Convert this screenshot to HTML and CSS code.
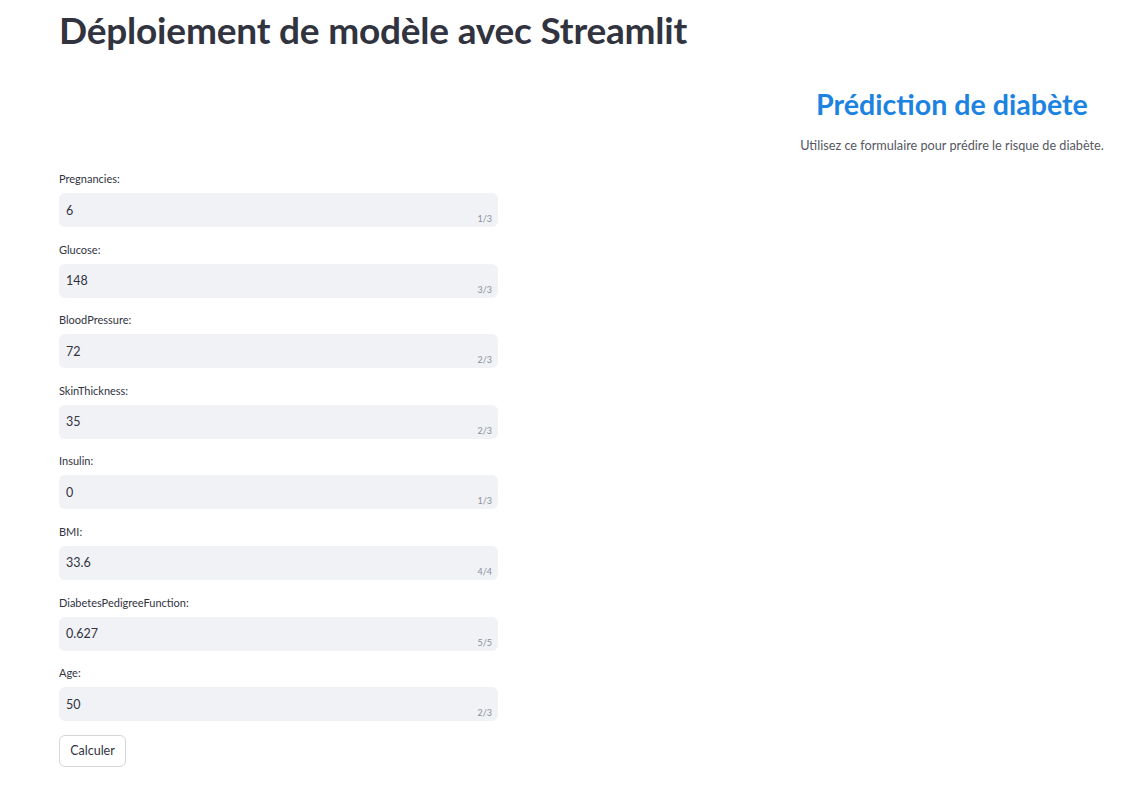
FILE: index.html
```html
<!DOCTYPE html>
<html lang="fr">
<head>
<meta charset="utf-8">
<title>Déploiement de modèle avec Streamlit</title>
<link rel="stylesheet" href="styles.css">
</head>
<body>
<main class="page">
  <h1 class="title">Déploiement de modèle avec Streamlit</h1>
  <section class="intro">
    <div class="intro-box">
      <h2 class="subtitle">Prédiction de diabète</h2>
      <p class="lead">Utilisez ce formulaire pour prédire le risque de diabète.</p>
    </div>
  </section>
  <form class="form">
    <div class="field"><label class="label">Pregnancies:</label><div class="input"><span class="value">6</span><span class="count">1/3</span></div></div>
    <div class="field"><label class="label">Glucose:</label><div class="input"><span class="value">148</span><span class="count">3/3</span></div></div>
    <div class="field"><label class="label">BloodPressure:</label><div class="input"><span class="value">72</span><span class="count">2/3</span></div></div>
    <div class="field"><label class="label">SkinThickness:</label><div class="input"><span class="value">35</span><span class="count">2/3</span></div></div>
    <div class="field"><label class="label">Insulin:</label><div class="input"><span class="value">0</span><span class="count">1/3</span></div></div>
    <div class="field"><label class="label">BMI:</label><div class="input"><span class="value">33.6</span><span class="count">4/4</span></div></div>
    <div class="field"><label class="label">DiabetesPedigreeFunction:</label><div class="input"><span class="value">0.627</span><span class="count">5/5</span></div></div>
    <div class="field"><label class="label">Age:</label><div class="input"><span class="value">50</span><span class="count">2/3</span></div></div>
    <div class="actions"><button type="button" class="button">Calculer</button></div>
  </form>
</main>
</body>
</html>
```
FILE: styles.css
```css
* { box-sizing: border-box; }
html, body { margin: 0; padding: 0; background: #ffffff; }
body {
  font-family: Lato, "Noto Sans", sans-serif;
  color: #31333f;
  overflow: hidden;
}
.page {
  padding: 0 0 0 59px;
  width: 1142px;
}
.title {
  margin: 0;
  padding-top: 9px;
  font-size: 37px;
  line-height: 42px;
  font-weight: 700;
  color: #31333f;
  letter-spacing: -0.2px;
}
.intro {
  display: flex;
  justify-content: flex-end;
  padding-right: 25px;
  margin-top: 38px;
}
.intro-box {
  width: 330px;
  text-align: center;
}
.subtitle {
  margin: 0;
  font-size: 28.6px;
  line-height: 30px;
  font-weight: 700;
  color: #1c83e1;
}
.lead {
  margin: 18px 0 0;
  font-size: 12.7px;
  line-height: 16px;
  color: #555761;
}
.form {
  margin-top: 15px;
  width: 439px;
  display: flex;
  flex-direction: column;
}
.field {
  display: flex;
  flex-direction: column;
  height: 70.6px;
}
.label {
  font-size: 11px;
  line-height: 14px;
  margin: 4px 0 7px;
  color: #31333f;
}
.input {
  position: relative;
  height: 34px;
  border-radius: 6px;
  background: #f0f2f6;
  display: flex;
  align-items: center;
  padding: 0 7px;
}
.value {
  font-size: 12.5px;
  color: #31333f;
}
.count {
  position: absolute;
  right: 6px;
  bottom: 3px;
  font-size: 9px;
  color: #8d8f96;
}
.actions { margin-top: 2px; }
.button {
  font-family: inherit;
  font-size: 12.5px;
  color: #31333f;
  background: #ffffff;
  border: 1px solid #d5d6da;
  border-radius: 6px;
  height: 32px;
  padding: 0 10px;
  width: 67px;
}
```
